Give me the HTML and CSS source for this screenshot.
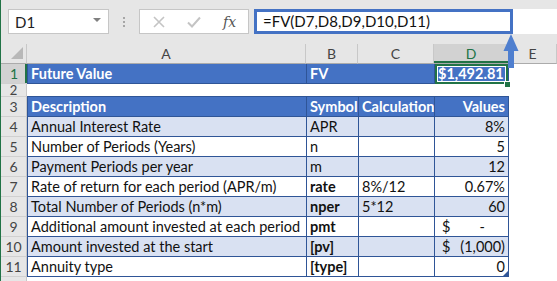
FILE: index.html
```html
<html>
	<head>
		<title>Future Value</title>
		<meta charset="utf-8" />
		<link rel="stylesheet" href="styles.css">
	</head>
	<body>
		<div class="app">
			<div class="fbar">
				<div class="namebox"><span>D1</span><span class="caret"></span></div>
				<div class="grip"><i></i><i></i><i></i></div>
				<div class="btns">
					<svg width="12" height="12" viewBox="0 0 12 12"><path d="M1 1L11 11M11 1L1 11" stroke="#c4c4c4" stroke-width="1.6" fill="none"/></svg>
					<svg width="14" height="12" viewBox="0 0 14 12"><path d="M1 6.5L5 10.5L13 1.5" stroke="#c4c4c4" stroke-width="2" fill="none"/></svg>
					<span class="fx">fx</span>
				</div>
				<div class="formula">=FV(D7,D8,D9,D10,D11)</div>
				<div class="formula-rest"></div>
			</div>

			<div class="sheet">
				<!-- column headers -->
				<div class="corner"><span class="tri"></span></div>
				<div class="ch">A</div>
				<div class="ch">B</div>
				<div class="ch">C</div>
				<div class="ch sel">D</div>
				<div class="ch">E</div>

				<!-- row 1 -->
				<div class="rh sel">1</div>
				<div class="c a hd">Future Value</div>
				<div class="c hd">FV</div>
				<div class="c hd nl"></div>
				<div class="c d hd r cur">$1,492.81<span class="handle"></span></div>
				<div class="e"></div>

				<!-- row 2 -->
				<div class="rh short">2</div>
				<div class="c a nl gap"></div>
				<div class="c nl gap"></div>
				<div class="c nl gap"></div>
				<div class="c nl gap"></div>
				<div class="e"></div>

				<!-- row 3 -->
				<div class="rh">3</div>
				<div class="c a hd">Description</div>
				<div class="c hd">Symbol</div>
				<div class="c hd">Calculation</div>
				<div class="c d hd r">Values</div>
				<div class="e"></div>

				<div class="rh">4</div>
				<div class="c a band">Annual Interest Rate</div>
				<div class="c band">APR</div>
				<div class="c band"></div>
				<div class="c d band r">8%</div>
				<div class="e"></div>

				<div class="rh">5</div>
				<div class="c a">Number of Periods (Years)</div>
				<div class="c">n</div>
				<div class="c"></div>
				<div class="c d r">5</div>
				<div class="e"></div>

				<div class="rh">6</div>
				<div class="c a band">Payment Periods per year</div>
				<div class="c band">m</div>
				<div class="c band"></div>
				<div class="c d band r">12</div>
				<div class="e"></div>

				<div class="rh">7</div>
				<div class="c a">Rate of return for each period (APR/m)</div>
				<div class="c b">rate</div>
				<div class="c">8%/12</div>
				<div class="c d r">0.67%</div>
				<div class="e"></div>

				<div class="rh">8</div>
				<div class="c a band">Total Number of Periods (n*m)</div>
				<div class="c band b">nper</div>
				<div class="c band">5*12</div>
				<div class="c d band r">60</div>
				<div class="e"></div>

				<div class="rh">9</div>
				<div class="c a">Additional amount invested at each period</div>
				<div class="c b">pmt</div>
				<div class="c"></div>
				<div class="c d acc"><span>$</span><span class="dash">-</span></div>
				<div class="e"></div>

				<div class="rh">10</div>
				<div class="c a band">Amount invested at the start</div>
				<div class="c band b">[pv]</div>
				<div class="c band"></div>
				<div class="c d band acc"><span>$</span><span>(1,000)</span></div>
				<div class="e"></div>

				<div class="rh">11</div>
				<div class="c a">Annuity type</div>
				<div class="c b">[type]</div>
				<div class="c"></div>
				<div class="c d r last">0<span class="resize"></span></div>
				<div class="e"></div>

				<div class="rh"></div>
				<div class="e"></div>
				<div class="e"></div>
				<div class="e"></div>
				<div class="e"></div>
				<div class="e"></div>
			</div>

			<svg class="arrow" width="16" height="36" viewBox="0 0 16 36">
				<path d="M8 1L0.5 18H5V35H11V18H15.5Z" fill="#4f7fcf"/>
			</svg>
		</div>
	</body>
</html>
```

FILE: styles.css
```css
body {
	margin: 0;
	font-family: "Lato", "Liberation Sans", sans-serif;
	background: #fff;
}
.app {
	position: relative;
	height: 281px;
	overflow: hidden;
	border-left: 1px solid #217346;
	background: #fff;
}

/* formula bar */
.fbar {
	display: flex;
	align-items: flex-start;
	height: 44px;
	padding-top: 9px;
	box-sizing: border-box;
	background: #e6e6e6;
}
.namebox {
	margin-left: 7px;
	width: 101px;
	height: 25px;
	box-sizing: border-box;
	background: #fff;
	border: 1px solid #c6c6c6;
	display: flex;
	align-items: center;
	justify-content: space-between;
	padding: 0 7px 0 6px;
	font-size: 15px;
	color: #222;
}
.caret {
	border-left: 4px solid transparent;
	border-right: 4px solid transparent;
	border-top: 4px solid #808080;
	margin-top: -4px;
}
.grip {
	width: 30px;
	height: 25px;
	display: flex;
	flex-direction: column;
	align-items: center;
	justify-content: center;
	gap: 2px;
}
.grip i {
	display: block;
	width: 2px;
	height: 2px;
	background: #a6a6a6;
}
.btns {
	width: 110px;
	height: 25px;
	box-sizing: border-box;
	background: #fff;
	border: 1px solid #c6c6c6;
	display: flex;
	align-items: center;
	gap: 22px;
	padding-left: 13px;
}
.fx {
	font-family: "DejaVu Serif", "Liberation Serif", serif;
	font-style: italic;
	font-size: 14px;
	color: #555;
}
.formula {
	margin-left: 5px;
	width: 259px;
	height: 25px;
	box-sizing: border-box;
	border: 3px solid #4472c4;
	background: #fff;
	font-size: 15px;
	line-height: 19px;
	padding-left: 6px;
	color: #111;
	white-space: nowrap;
}
.formula-rest {
	flex: 1;
	height: 25px;
	background: #fff;
}

/* sheet grid */
.sheet {
	display: grid;
	grid-template-columns: 26px 279px 52px 76px 75px 1fr;
	grid-template-rows: 20px 20px 13px repeat(9, 20px) 20px;
	font-size: 14.5px;
}
.corner, .ch, .rh {
	background: #e6e6e6;
	color: #444;
	font-size: 14px;
	box-sizing: border-box;
}
.corner {
	display: flex;
	align-items: flex-end;
	justify-content: flex-end;
	padding: 0 3px 4px 0;
	border-bottom: 1px solid #ababab;
	border-right: 1px solid #c8c8c8;
}
.tri {
	width: 0;
	height: 0;
	border-left: 12px solid transparent;
	border-bottom: 12px solid #b8b8b8;
}
.ch {
	text-align: center;
	line-height: 19px;
	border-right: 1px solid #c8c8c8;
	border-bottom: 1px solid #ababab;
}
.ch.sel {
	background: #d2d2d2;
	color: #217346;
	box-shadow: inset 0 -2px #217346;
}
.rh {
	display: flex;
	align-items: flex-end;
	justify-content: center;
	line-height: 19px;
	overflow: hidden;
	border-bottom: 1px solid #d0d0d0;
	border-right: 1px solid #c8c8c8;
}
.rh.short {
	line-height: 12px;
	font-size: 13px;
}
.rh.sel {
	background: #d2d2d2;
	color: #217346;
	border-right: 0;
	box-shadow: inset -2px 0 #217346;
}

/* cells */
.c {
	box-sizing: border-box;
	line-height: 19px;
	padding: 0 3px;
	white-space: nowrap;
	overflow: hidden;
	color: #111;
	border-left: 1px solid #2f5597;
	border-bottom: 1px solid #2f5597;
}
.c.nl {
	border-left: 0;
}
.c.gap {
	background: #fff;
}
.c.d {
	border-right: 1px solid #2f5597;
	position: relative;
}
.c.gap.d {
	border-right: 0;
}
.hd {
	background: #4472c4;
	color: #fff;
	font-weight: bold;
}
.band {
	background: #d9e1f2;
}
.b {
	font-weight: bold;
}
.r {
	text-align: right;
}
.acc {
	display: flex;
	justify-content: space-between;
	padding-left: 7px;
}
.dash {
	margin-right: 20px;
}
.cur {
	overflow: visible;
	box-shadow: inset 0 0 0 2px #217346, inset 0 0 0 3px #fff;
	border-right: 0;
	border-bottom: 0;
	padding-right: 5px;
	line-height: 20px;
}
.handle {
	position: absolute;
	right: -3px;
	bottom: -4px;
	width: 5px;
	height: 5px;
	background: #217346;
	border: 1px solid #fff;
}
.resize {
	position: absolute;
	right: 0;
	bottom: 0;
	width: 0;
	height: 0;
	border-left: 5px solid transparent;
	border-bottom: 5px solid #2f5597;
}
.e {
	background: #fff;
}
.arrow {
	position: absolute;
	left: 502px;
	top: 33px;
}
```
